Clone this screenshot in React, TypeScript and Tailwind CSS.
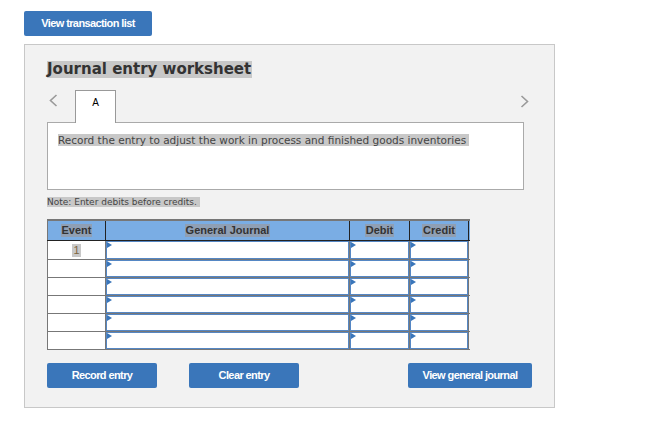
import React from "react";

const verdana = "font-['DejaVu_Sans',Verdana,sans-serif]";
const arial = "font-['Liberation_Sans',Arial,sans-serif]";

function Flag() {
  return (
    <span className="absolute left-[1px] top-[1px] h-0 w-0 border-y-[3px] border-l-[5px] border-y-transparent border-l-[#3a76ba]" />
  );
}

function InputCell({ last }: { last?: boolean }) {
  return (
    <div
      className={`relative h-full border-l border-[#777] bg-white ${last ? "border-r" : ""}`}
    >
      <div className="h-full border border-[#5587c4]" />
      <Flag />
    </div>
  );
}

function BlueButton({ label, className }: { label: string; className: string }) {
  return (
    <button
      className={`block h-[25px] rounded-[2px] bg-[#3a76ba] text-[11px] font-bold leading-[25px] tracking-[-0.6px] text-white ${arial} ${className}`}
    >
      {label}
    </button>
  );
}

export default function App() {
  const rows = [0, 1, 2, 3, 4, 5];

  return (
    <div className="h-[428px] w-[657px] bg-white pl-[24px] pt-[11px]">
      <BlueButton label="View transaction list" className="w-[128px]" />

      <div className="mt-[8px] h-[364px] w-[531px] border border-[#c8c8c8] bg-[#f2f2f2] pl-[22px] pt-[16px]">
        <h2
          className={`w-fit bg-[#c8c8c8] pr-[1px] text-[15px] font-bold leading-[17px] text-[#333] ${verdana}`}
        >
          Journal entry worksheet
        </h2>

        <div className="mt-[12px] flex h-[32px] w-[476px] items-start">
          <span className="ml-[2px] mt-[4px] block w-[26px]">
            <svg width="9" height="13" viewBox="0 0 9 13" fill="none" className="block">
              <path d="M7.5 1 L1.5 6.5 L7.5 12" stroke="#9a9a9a" strokeWidth="1.6" />
            </svg>
          </span>
          <div
            className={`relative z-10 flex h-[33px] w-[41px] justify-center border border-b-0 border-[#999] bg-white pt-[6px] text-[10px] leading-[12px] text-black ${arial}`}
          >
            A
          </div>
          <span className="ml-auto mr-[-6px] mt-[5px] block">
            <svg width="9" height="13" viewBox="0 0 9 13" fill="none" className="block">
              <path d="M1.5 1 L7.5 6.5 L1.5 12" stroke="#9a9a9a" strokeWidth="1.6" />
            </svg>
          </span>
        </div>

        <div
          className={`h-[68px] w-[477px] border border-[#aaa] bg-white pl-[10px] pt-[10px] text-[10.5px] leading-[14px] ${verdana}`}
        >
          <span className="bg-[#c8c8c8] pr-[3px] text-[#444]">
            Record the entry to adjust the work in process and finished goods inventories
          </span>
        </div>

        <div className={`mt-[6px] h-[12px] text-[9px] leading-[12px] ${verdana}`}>
          <span className="bg-[#c8c8c8] pr-[3px] text-[#444]">
            Note: Enter debits before credits.
          </span>
        </div>

        <div className="mt-[11px] w-[423px] border-t-2 border-b border-[#777]">
          <div
            className={`grid h-[20px] grid-cols-[58px_244px_60px_60px] border-b border-[#222] bg-[#7aade4] text-[11px] font-bold leading-[13px] text-[#333] ${arial}`}
          >
            <div className="flex items-center justify-center border-l border-[#777]">
              <span className="bg-[#8f9fb4] px-[1px]">Event</span>
            </div>
            <div className="flex items-center justify-center border-l border-[#222]">
              <span className="bg-[#8f9fb4] px-[1px]">General Journal</span>
            </div>
            <div className="flex items-center justify-center border-l border-[#222]">
              <span className="bg-[#8f9fb4] px-[1px]">Debit</span>
            </div>
            <div className="flex items-center justify-center border-x border-[#222]">
              <span className="bg-[#8f9fb4] px-[1px]">Credit</span>
            </div>
          </div>

          {rows.map((r) => (
            <div
              key={r}
              className={`grid h-[18px] grid-cols-[58px_244px_60px_60px] ${r > 0 ? "border-t border-[#777]" : ""}`}
            >
              <div
                className={`flex items-center justify-center border-l border-[#777] bg-white text-[11px] leading-[13px] ${arial}`}
              >
                {r === 0 && <span className="bg-[#c8c8c8] px-[1px] text-[#7d6540]">1</span>}
              </div>
              <InputCell />
              <InputCell />
              <InputCell last />
            </div>
          ))}
        </div>

        <div className="mt-[13px] flex w-[485px]">
          <BlueButton label="Record entry" className="w-[110px]" />
          <BlueButton label="Clear entry" className="ml-[32px] w-[110px]" />
          <BlueButton label="View general journal" className="ml-auto w-[124px]" />
        </div>
      </div>
    </div>
  );
}
